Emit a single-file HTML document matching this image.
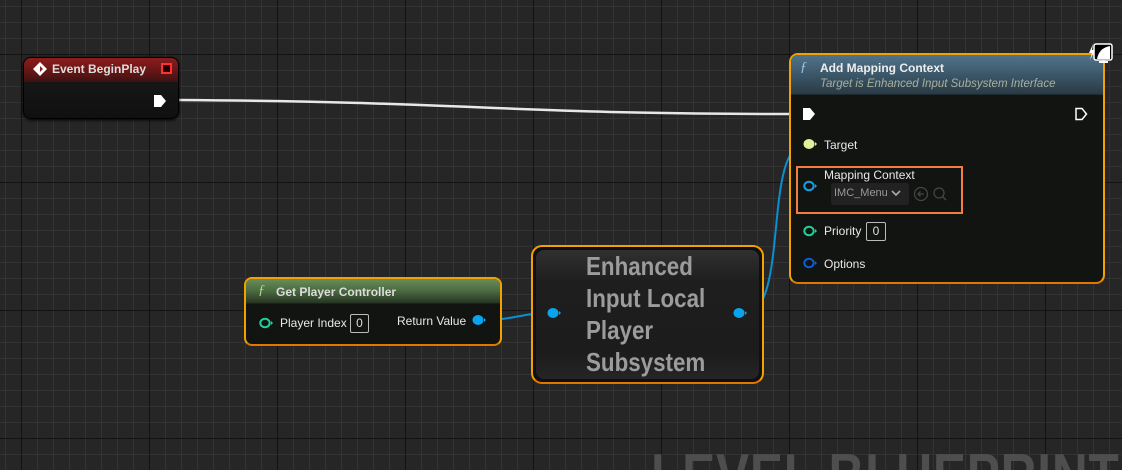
<!DOCTYPE html>
<html><head><meta charset="utf-8"><style>
*{margin:0;padding:0;box-sizing:border-box}
html{width:1122px;height:470px;overflow:hidden}
body{width:1122px;height:470px;overflow:hidden;background:#262626;font-family:"Liberation Sans",sans-serif;position:relative}
.grid{position:absolute;inset:0;
background-image:
linear-gradient(to right,#131313 1px,transparent 1px),
linear-gradient(to bottom,#131313 1px,transparent 1px),
linear-gradient(to right,#333 1px,transparent 1px),
linear-gradient(to bottom,#333 1px,transparent 1px);
background-size:128px 128px,128px 128px,16px 16px,16px 16px;
background-position:21px 0,0 54px,5px 0,0 6px}
.abs{position:absolute}
.t{color:#e8e8e8;font-size:12px;position:absolute;white-space:nowrap}
.node{position:absolute;border-radius:8px;overflow:hidden}
</style></head><body>
<div class="grid"></div>
<div class="abs" style="left:651px;top:444px;height:26px;overflow:hidden;width:471px"><div style="font-size:62px;font-weight:bold;color:#4e4e4e;letter-spacing:1px;transform:scaleX(0.8);transform-origin:0 0;white-space:nowrap;line-height:72px;margin-top:-3px">LEVEL BLUEPRINT</div></div>

<svg class="abs" style="left:0;top:0" width="1122" height="470">
<path d="M178,100 C480,102 500,114 792,114" stroke="#e8e8e8" stroke-width="2.5" fill="none"/>
<path d="M483,320 C515,320 520,313 552,313" stroke="#0a8fd0" stroke-width="2" fill="none"/>
<path d="M745,313 C790,313 762,144 806,144" stroke="#0a8fd0" stroke-width="2" fill="none"/>
</svg>

<div class="node" style="left:23px;top:57px;width:156px;height:62px;background:linear-gradient(#1a1a1a,#0f100f);border:1px solid #000;box-shadow:0 1px 3px #000">
<div style="height:24px;background:linear-gradient(#8e1c1c,#5a1414 70%,#3a1212)"></div>
</div>
<svg class="abs" style="left:32px;top:61px" width="16" height="16"><path d="M8,1 L15,8 L8,15 L1,8Z" fill="#fff"/><path d="M8,5 L11,8 L8,11Z" fill="#8e1c1c"/></svg>
<div class="t" style="left:52px;top:62px;font-weight:bold;color:#ddd">Event BeginPlay</div>
<div class="abs" style="left:161px;top:63px;width:11px;height:11px;border:2px solid #ff3030;background:#200"></div>
<svg class="abs" style="left:153px;top:94px" width="14" height="14"><path d="M1,1 H8 L13,7 L8,13 H1Z" fill="#fff"/></svg>

<div class="node" style="left:789px;top:53px;width:316px;height:231px;border:2px solid #f2a200;border-bottom-color:#e07800;border-radius:9px;background:#121412">
<div style="height:40px;background:linear-gradient(#52748c,#3a5466 55%,#2a3a44);border-bottom:1px solid #1d2a30"></div>
</div>
<div class="t" style="left:800px;top:60px;font-style:italic;color:#9cc8ec;font-size:14px;font-family:'Liberation Serif',serif">ƒ</div>
<div class="t" style="left:820px;top:61px;font-weight:bold;color:#eee">Add Mapping Context</div>
<div class="t" style="left:820px;top:78px;font-style:italic;color:#a9b09c;font-size:11.5px">Target is Enhanced Input Subsystem Interface</div>
<svg class="abs" style="left:802px;top:107px" width="14" height="14"><path d="M1,1 H8 L13,7 L8,13 H1Z" fill="#fff"/></svg>
<svg class="abs" style="left:1074px;top:107px" width="14" height="14"><path d="M2,1.5 H8 L12.5,7 L8,12.5 H2Z" fill="none" stroke="#fff" stroke-width="1.5"/></svg>
<svg class="abs" style="left:803px;top:138px" width="14" height="12"><ellipse cx="6" cy="6" rx="5.5" ry="5" fill="#dff29a"/><path d="M12,4 L14,6 L12,8Z" fill="#dff29a"/></svg>
<div class="t" style="left:824px;top:138px">Target</div>
<div class="abs" style="left:796px;top:166px;width:167px;height:48px;border:2px solid #f47c40"></div>
<svg class="abs" style="left:803px;top:180px" width="14" height="12"><ellipse cx="6" cy="6" rx="4.7" ry="4.3" fill="none" stroke="#16a0e8" stroke-width="2"/><path d="M12,4 L14,6 L12,8Z" fill="#16a0e8"/></svg>
<div class="t" style="left:824px;top:168px">Mapping Context</div>
<div class="abs" style="left:831px;top:183px;width:78px;height:22px;background:#222;border-radius:3px"></div>
<div class="t" style="left:834px;top:187px;color:#999;font-size:11px">IMC_Menu</div>
<svg class="abs" style="left:891px;top:189px" width="10" height="8"><path d="M1,2 L5,6 L9,2" fill="none" stroke="#aaa" stroke-width="1.6"/></svg>
<svg class="abs" style="left:913px;top:186px" width="40" height="18"><circle cx="8" cy="8" r="6.5" fill="none" stroke="#444" stroke-width="1.3"/><path d="M11,8 H5 M7.5,5.5 L5,8 L7.5,10.5" fill="none" stroke="#444" stroke-width="1.3"/><circle cx="26" cy="7" r="5" fill="none" stroke="#444" stroke-width="1.3"/><path d="M29.5,10.5 L33,14" stroke="#444" stroke-width="1.5"/></svg>
<svg class="abs" style="left:803px;top:225px" width="14" height="12"><ellipse cx="6" cy="6" rx="4.7" ry="4.3" fill="none" stroke="#1fd19a" stroke-width="2"/><path d="M12,4 L14,6 L12,8Z" fill="#1fd19a"/></svg>
<div class="t" style="left:824px;top:224px">Priority</div>
<div class="abs" style="left:866px;top:222px;width:20px;height:19px;border:1px solid #bbb;border-radius:2px;color:#ddd;font-size:12px;text-align:center;line-height:17px">0</div>
<svg class="abs" style="left:803px;top:257px" width="14" height="12"><ellipse cx="6" cy="6" rx="4.7" ry="4.3" fill="none" stroke="#0c5ed8" stroke-width="2"/><path d="M12,4 L14,6 L12,8Z" fill="#0c5ed8"/></svg>
<div class="t" style="left:824px;top:257px">Options</div>
<svg class="abs" style="left:1088px;top:42px" width="26" height="26"><rect x="6" y="2" width="18" height="16" rx="2" fill="#000" stroke="#fff" stroke-width="1.5"/><path d="M9,17 Q11,6 22,4 V17Z" fill="#fff"/><path d="M11,20 H20" stroke="#fff" stroke-width="2"/><path d="M5,2 L1,11 H4 L2,18 L7,8 H4Z" fill="#fff"/></svg>

<div class="node" style="left:244px;top:277px;width:258px;height:69px;border:2px solid #f2a200;border-bottom-color:#e07800;border-radius:8px;background:#121412">
<div style="height:25px;background:linear-gradient(#6b8c5a,#4a6a40 50%,#263424);border-bottom:1px solid #1a2218"></div>
</div>
<div class="t" style="left:258px;top:283px;font-style:italic;color:#a6e08a;font-size:14px;font-family:'Liberation Serif',serif">ƒ</div>
<div class="t" style="left:276px;top:285px;font-weight:bold;color:#ddd">Get Player Controller</div>
<svg class="abs" style="left:259px;top:317px" width="14" height="12"><ellipse cx="6" cy="6" rx="4.7" ry="4.3" fill="none" stroke="#1fd19a" stroke-width="2"/><path d="M12,4 L14,6 L12,8Z" fill="#1fd19a"/></svg>
<div class="t" style="left:280px;top:316px">Player Index</div>
<div class="abs" style="left:350px;top:314px;width:19px;height:19px;border:1px solid #bbb;border-radius:2px;color:#ddd;font-size:12px;text-align:center;line-height:17px">0</div>
<div class="t" style="left:397px;top:314px">Return Value</div>
<svg class="abs" style="left:472px;top:314px" width="15" height="12"><ellipse cx="6" cy="6" rx="5.5" ry="5" fill="#0aa4ee"/><path d="M12,4 L14,6 L12,8Z" fill="#0aa4ee"/></svg>

<div class="node" style="left:531px;top:245px;width:233px;height:139px;border:2px solid #f2a200;border-bottom-color:#e07800;border-radius:11px;background:#101010">
<div style="position:absolute;inset:3px;border-radius:8px;background:linear-gradient(#303030,#1e1e1e 25%,#1c1c1c 80%,#252525)"></div>
</div>
<div class="abs" style="left:586px;top:250px;font-size:26px;font-weight:bold;color:#9c9c9c;line-height:32px;transform:scaleX(0.86);transform-origin:0 0">Enhanced<br>Input Local<br>Player<br>Subsystem</div>
<svg class="abs" style="left:547px;top:307px" width="15" height="12"><ellipse cx="6" cy="6" rx="5.5" ry="5" fill="#0aa4ee"/><path d="M12,4 L14,6 L12,8Z" fill="#0aa4ee"/></svg>
<svg class="abs" style="left:733px;top:307px" width="15" height="12"><ellipse cx="6" cy="6" rx="5.5" ry="5" fill="#0aa4ee"/><path d="M12,4 L14,6 L12,8Z" fill="#0aa4ee"/></svg>
</body></html>
